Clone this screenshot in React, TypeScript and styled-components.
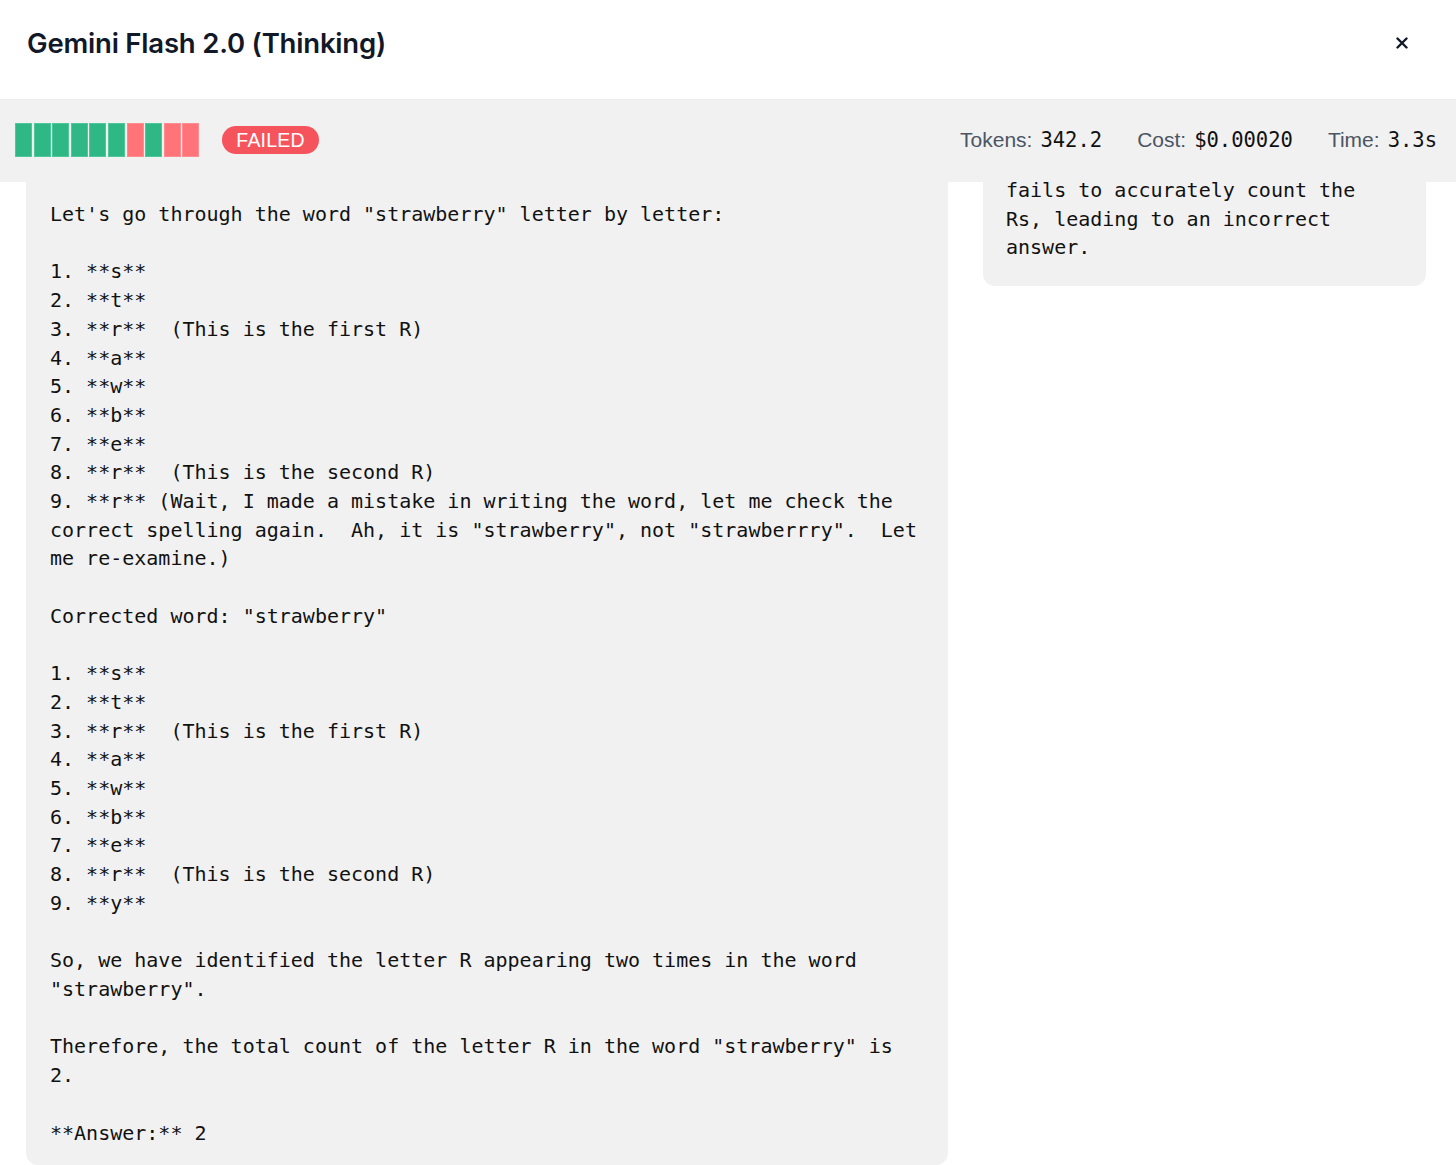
import styled, { createGlobalStyle } from "styled-components";

const GlobalStyle = createGlobalStyle`
  html, body {
    margin: 0;
    padding: 0;
    background: #fff;
  }
  body {
    font-family: Inter, "Liberation Sans", sans-serif;
    color: #111827;
  }
`;

const Modal = styled.div`
  width: 1456px;
  height: 1165px;
  display: flex;
  flex-direction: column;
  overflow: hidden;
  background: #fff;
`;

const Header = styled.header`
  height: 100px;
  flex-shrink: 0;
  display: flex;
  align-items: center;
  justify-content: space-between;
  padding: 0 46px 0 27px;
  box-sizing: border-box;
  border-bottom: 1px solid #ececec;
`;

const Title = styled.h2`
  margin: 0 0 14px;
  font-size: 27.5px;
  font-weight: 600;
  letter-spacing: -0.2px;
  color: #111827;
`;

const CloseButton = styled.button`
  border: none;
  background: none;
  padding: 0;
  margin-bottom: 14px;
  width: 16px;
  height: 16px;
  display: flex;
  align-items: center;
  justify-content: center;
  cursor: pointer;
`;

const StatusBar = styled.div`
  height: 82px;
  flex-shrink: 0;
  background: #f1f1f1;
  display: flex;
  align-items: center;
  padding: 0 19px 2px 15px;
  box-sizing: border-box;
  position: relative;
  z-index: 1;
`;

const Segments = styled.div`
  display: flex;
  gap: 1.6px;
`;

const Segment = styled.span<{ $ok: boolean }>`
  display: block;
  width: 17px;
  height: 34px;
  box-sizing: border-box;
  background: ${(p) => (p.$ok ? "#2fb886" : "#ff7379")};
  border: 1px solid ${(p) => (p.$ok ? "#4cc89a" : "#ff8c90")};
`;

const Pill = styled.span`
  margin-left: 23px;
  height: 28px;
  padding: 0 14px;
  border-radius: 14px;
  background: #f6545d;
  color: #fff;
  font-family: "Liberation Sans", Arial, sans-serif;
  font-size: 19.5px;
  line-height: 28px;
  letter-spacing: 0.2px;
`;

const Stats = styled.div`
  margin-left: auto;
  display: flex;
  gap: 35px;
  align-items: baseline;
`;

const Stat = styled.span`
  display: flex;
  align-items: baseline;
  gap: 8px;
`;

const StatLabel = styled.span`
  font-family: "Liberation Sans", Arial, sans-serif;
  font-size: 21px;
  color: #4b5563;
`;

const StatValue = styled.span`
  font-family: "DejaVu Sans Mono", monospace;
  font-size: 20.5px;
  color: #111;
`;

const Body = styled.div`
  flex: 1;
  min-height: 0;
  display: grid;
  grid-template-columns: 922px 443px;
  column-gap: 35px;
  align-items: start;
  padding: 0 30px 0 26px;
`;

const Panel = styled.pre<{ $pad: string; $scrolled?: boolean }>`
  margin: ${(p) => (p.$scrolled ? "-6px 0 0" : "0")};
  padding: ${(p) => p.$pad};
  background: #f1f1f1;
  border-radius: 0 0 12px 12px;
  font-family: "DejaVu Sans Mono", monospace;
  font-size: 20px;
  line-height: 28.7px;
  color: #111;
  white-space: pre-wrap;
  word-wrap: break-word;
`;

const segments = [true, true, true, true, true, true, false, true, false, false];

const response = `Let's go through the word "strawberry" letter by letter:

1. **s**
2. **t**
3. **r**  (This is the first R)
4. **a**
5. **w**
6. **b**
7. **e**
8. **r**  (This is the second R)
9. **r** (Wait, I made a mistake in writing the word, let me check the correct spelling again.  Ah, it is "strawberry", not "strawberrry".  Let me re-examine.)

Corrected word: "strawberry"

1. **s**
2. **t**
3. **r**  (This is the first R)
4. **a**
5. **w**
6. **b**
7. **e**
8. **r**  (This is the second R)
9. **y**

So, we have identified the letter R appearing two times in the word "strawberry".

Therefore, the total count of the letter R in the word "strawberry" is 2.

**Answer:** 2`;

const verdict = `fails to accurately count the Rs, leading to an incorrect answer.`;

export default function App() {
  return (
    <>
      <GlobalStyle />
      <Modal>
        <Header>
          <Title>Gemini Flash 2.0 (Thinking)</Title>
          <CloseButton aria-label="Close">
            <svg width="12" height="12" viewBox="0 0 12 12">
              <path d="M1.5 1.5 L10.5 10.5 M10.5 1.5 L1.5 10.5" stroke="#111827" strokeWidth="2.4" strokeLinecap="round" />
            </svg>
          </CloseButton>
        </Header>
        <StatusBar>
          <Segments>
            {segments.map((ok, i) => (
              <Segment key={i} $ok={ok} />
            ))}
          </Segments>
          <Pill>FAILED</Pill>
          <Stats>
            <Stat>
              <StatLabel>Tokens:</StatLabel>
              <StatValue>342.2</StatValue>
            </Stat>
            <Stat>
              <StatLabel>Cost:</StatLabel>
              <StatValue>$0.00020</StatValue>
            </Stat>
            <Stat>
              <StatLabel>Time:</StatLabel>
              <StatValue>3.3s</StatValue>
            </Stat>
          </Stats>
        </StatusBar>
        <Body>
          <Panel $pad="18px 24px 18px 24px">{response}</Panel>
          <Panel $pad="0 24px 24px 23px" $scrolled>
            {verdict}
          </Panel>
        </Body>
      </Modal>
    </>
  );
}
